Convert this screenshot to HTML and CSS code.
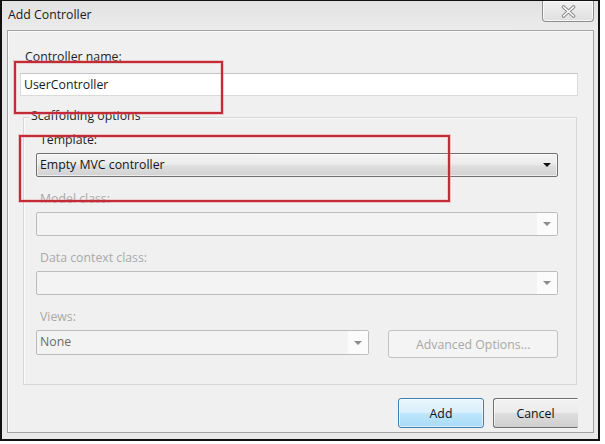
FILE: index.html
```html
<!DOCTYPE html>
<html>
<head>
<meta charset="utf-8">
<link rel="stylesheet" href="styles.css">
</head>
<body>
<div class="shot">
  <div class="window">
    <div class="titlebar">
      <span class="title">Add Controller</span>
      <div class="close">
        <svg width="15" height="13" viewBox="0 0 15 13">
          <path d="M2.5 2 L12.5 11 M12.5 2 L2.5 11" stroke="#8a8a8a" stroke-width="3.6" stroke-linecap="round" fill="none"/>
          <path d="M2.5 2 L12.5 11 M12.5 2 L2.5 11" stroke="#ffffff" stroke-width="1.6" stroke-linecap="round" fill="none"/>
        </svg>
      </div>
    </div>
    <div class="content">
      <div class="label name-label">Controller name:</div>
      <div class="textbox">UserController</div>
      <div class="group">
        <div class="legend">Scaffolding options</div>
        <div class="field first">
          <div class="label">Template:</div>
          <div class="combo enabled"><span class="value">Empty MVC controller</span><span class="drop"><span class="arrow"></span></span></div>
        </div>
        <div class="field">
          <div class="label dim">Model class:</div>
          <div class="combo disabled"><span class="value"></span><span class="drop"><span class="arrow"></span></span></div>
        </div>
        <div class="field">
          <div class="label dim">Data context class:</div>
          <div class="combo disabled"><span class="value"></span><span class="drop"><span class="arrow"></span></span></div>
        </div>
        <div class="field">
          <div class="label dim">Views:</div>
          <div class="views-row">
            <div class="combo disabled views"><span class="value none">None</span><span class="drop"><span class="arrow"></span></span></div>
            <div class="btn adv">Advanced Options...</div>
          </div>
        </div>
      </div>
      <div class="buttons">
        <div class="btn add">Add</div>
        <div class="btn cancel">Cancel</div>
      </div>
    </div>
  </div>
  <div class="mark mark1"></div>
  <div class="mark mark2"></div>
</div>
</body>
</html>
```
FILE: styles.css
```css
* { box-sizing: border-box; }
body {
  margin: 0;
  background: #ffffff;
  font-family: "Open Sans", "Noto Sans", sans-serif;
  font-size: 12.3px;
  color: #1e1e1e;
}
.shot {
  position: relative;
  width: 600px;
  height: 441px;
  border-left: 2px solid #111;
  border-top: 1px solid #111;
  border-right: 2px solid #111;
  border-bottom: 2px solid #111;
  background: #e9e9e9;
}
.window {
  display: flex;
  flex-direction: column;
  height: 438px;
}
.titlebar {
  height: 29px;
  display: flex;
  align-items: flex-start;
  background: linear-gradient(#e2e2e2, #ebebeb);
  flex: none;
}
.title {
  padding-left: 6px;
  padding-top: 6px;
  line-height: 16px;
  color: #1a1a1a;
}
.close {
  margin-left: auto;
  margin-right: 4px;
  width: 52px;
  height: 21px;
  border: 1px solid #8e8e8e;
  border-top: none;
  border-radius: 0 0 4px 4px;
  background: linear-gradient(#f0f0f0, #e0e0e0);
  display: flex;
  align-items: center;
  justify-content: center;
  box-shadow: inset 0 0 0 1px rgba(255,255,255,0.7);
}
.content {
  flex: none;
  height: 403px;
  margin: 0 4px 0 5px;
  border: 1px solid #a3a3a3;
  background: #f0f0f0;
  padding: 18px 15px 0 12px;
  box-shadow: inset 1px 1px 0 #fbfbfb;
}
.label {
  line-height: 16px;
  height: 16px;
  white-space: nowrap;
}
.name-label { margin-left: 5px; }
.dim { color: #a9a9a9; }
.textbox {
  margin-top: 8px;
  width: 558px;
  height: 23px;
  background: #ffffff;
  border: 1px solid #dadada;
  border-top-color: #c4c4c4;
  padding-left: 3px;
  line-height: 21px;
  color: #1a1a1a;
}
.group {
  margin-top: 21px;
  margin-left: 3px;
  width: 554px;
  height: 268px;
  border: 1px solid #d6d6d6;
  box-shadow: inset 1px 1px 0 #fafafa;
  padding: 0 18px 0 12px;
}
.legend {
  margin-top: -10px;
  margin-left: -7px;
  width: fit-content;
  padding: 0 2px;
  line-height: 16px;
  background: #f0f0f0;
  color: #1e1e1e;
}
.field { margin-top: 14px; }
.field.first { margin-top: 8px; }
.field .label {
  margin-left: 4px;
  margin-bottom: 5px;
}
.combo {
  height: 24px;
  display: flex;
  align-items: stretch;
  border-radius: 2px;
}
.combo .value {
  flex: 1;
  padding-left: 3px;
  line-height: 22px;
  white-space: nowrap;
}
.combo .drop {
  width: 20px;
  display: flex;
  align-items: center;
  justify-content: center;
}
.arrow {
  width: 0;
  height: 0;
  border-left: 4px solid transparent;
  border-right: 4px solid transparent;
  border-top: 4px solid #111;
}
.combo.enabled {
  border: 1px solid #707070;
  background: linear-gradient(#f3f3f3 0%, #ececec 45%, #dedede 55%, #d2d2d2 100%);
  color: #151515;
  box-shadow: inset 0 0 0 1px rgba(255,255,255,0.6);
}
.combo.disabled {
  border: 1px solid #bcbcbc;
  background: #f3f3f3;
}
.combo.disabled .drop { background: #fbfbfb; }
.combo.disabled .arrow { border-top-color: #8c8c8c; }
.views-row {
  margin-top: 2px;
  display: flex;
  align-items: flex-start;
  gap: 19px;
}
.combo.views {
  width: 334px;
  height: 25px;
}
.value.none { color: #6a6a6a; }
.btn {
  display: flex;
  align-items: center;
  justify-content: center;
  border-radius: 3px;
  white-space: nowrap;
}
.btn.adv {
  width: 170px;
  height: 28px;
  border: 1px solid #c2c2c2;
  background: #f4f4f4;
  color: #a8a8a8;
}
.buttons {
  margin-top: 13px;
  display: flex;
  justify-content: flex-end;
  gap: 9px;
}
.btn.add {
  width: 86px;
  height: 30px;
  border: 1px solid #3c7fb1;
  background: linear-gradient(#eaf6fd 0%, #d9f0fc 48%, #bee6fd 52%, #a9daf5 100%);
  box-shadow: inset 0 0 0 1px rgba(255,255,255,0.6);
  color: #111;
}
.btn.cancel {
  width: 85px;
  height: 30px;
  border: 1px solid #707070;
  border-right-color: transparent;
  border-radius: 3px 0 0 3px;
  background: linear-gradient(#f3f3f3 0%, #ebebeb 48%, #dddddd 52%, #cfcfcf 100%);
  box-shadow: inset 1px 1px 0 rgba(255,255,255,0.7);
  color: #111;
}
.mark {
  position: absolute;
  border: 2px solid #c22c37;
  box-shadow: 0 0 0 1px rgba(235,140,150,0.45), inset 0 0 0 1px rgba(235,140,150,0.35);
}
.mark1 {
  left: 12px;
  top: 60px;
  width: 209px;
  height: 53px;
}
.mark2 {
  left: 17px;
  top: 134px;
  width: 431px;
  height: 67px;
}
```
